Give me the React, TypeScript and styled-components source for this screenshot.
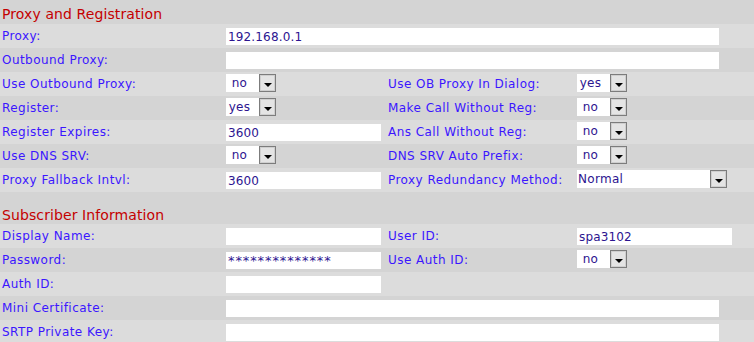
import styled, { createGlobalStyle } from 'styled-components';

const GlobalStyle = createGlobalStyle`
    html, body {
        margin: 0;
        padding: 0;
        background: #d4d4d4;
    }
    body {
        font-family: Verdana, "DejaVu Sans", sans-serif;
    }
`

const Page = styled.div`
    width: 754px;
    display: flex;
    flex-direction: column;
`
const SectionTitle = styled.div<{spaced?: boolean}>`
    height: ${(props)=>props.spaced ? '32px' : '24px'};
    display: flex;
    align-items: flex-end;
    padding: 0 0 ${(props)=>props.spaced ? '1px' : '2px'} 2px;
    box-sizing: border-box;
    background: #d4d4d4;
    color: #c40000;
    font-size: 14px;
    letter-spacing: 0.1px;
`
const Row = styled.div<{light?: boolean}>`
    display: grid;
    grid-template-columns: 226px 160px 191px 1fr;
    height: 24px;
    align-items: start;
    background: ${(props)=>props.light ? '#dcdcdc' : '#d4d4d4'};
`
const Label = styled.div`
    padding: 5px 0 0 2px;
    font-size: 12px;
    letter-spacing: 0.45px;
    color: #3b16ff;
    white-space: nowrap;
`
const TextBox = styled.input<{wide?: boolean; masked?: boolean}>`
    margin-top: 4px;
    width: ${(props)=>props.wide ? '493px' : '155px'};
    height: 17px;
    box-sizing: border-box;
    border: 0;
    outline: none;
    padding: 0 2px;
    background: #fff;
    font-family: Verdana, "DejaVu Sans", sans-serif;
    font-size: ${(props)=>props.masked ? '13px' : '12px'};
    letter-spacing: ${(props)=>props.masked ? '0.9px' : '0.15px'};
    color: #2c1490;
    grid-column: ${(props)=>props.wide ? '2 / 5' : 'auto'};
`
const Select = styled.div<{long?: boolean}>`
    margin-top: 2px;
    display: flex;
    height: 18px;
    width: ${(props)=>props.long ? '150px' : '50px'};
`
const SelectValue = styled.div<{long?: boolean}>`
    flex: 1;
    background: #fff;
    font-size: 12px;
    letter-spacing: 0.3px;
    line-height: 18px;
    color: #2c1490;
    text-align: ${(props)=>props.long ? 'left' : 'center'};
    padding: ${(props)=>props.long ? '0 0 0 1px' : '0 6px 0 0'};
`
const DropButton = styled.div`
    width: 17px;
    height: 18px;
    box-sizing: border-box;
    border: 1px solid #7c7c7c;
    box-shadow: inset 0 0 0 1px #cfcfcf;
    background: #e4e4e4;
    display: flex;
    justify-content: center;
    align-items: center;
    padding-top: 3px;
    &::after{
        content: '';
        border-left: 4px solid transparent;
        border-right: 4px solid transparent;
        border-top: 4px solid #000;
    }
`
const Empty = styled.div``

function Drop({value, long}:{value:string; long?:boolean}){
    return (
        <Select long={long}>
            <SelectValue long={long}>{value}</SelectValue>
            <DropButton/>
        </Select>
    )
}

export default function App(){
    return (
        <Page>
            <GlobalStyle/>
            <SectionTitle>Proxy and Registration</SectionTitle>
            <Row light>
                <Label>Proxy:</Label>
                <TextBox wide readOnly value="192.168.0.1"/>
            </Row>
            <Row>
                <Label>Outbound Proxy:</Label>
                <TextBox wide readOnly value=""/>
            </Row>
            <Row light>
                <Label>Use Outbound Proxy:</Label>
                <Drop value="no"/>
                <Label>Use OB Proxy In Dialog:</Label>
                <Drop value="yes"/>
            </Row>
            <Row>
                <Label>Register:</Label>
                <Drop value="yes"/>
                <Label>Make Call Without Reg:</Label>
                <Drop value="no"/>
            </Row>
            <Row light>
                <Label>Register Expires:</Label>
                <TextBox readOnly value="3600"/>
                <Label>Ans Call Without Reg:</Label>
                <Drop value="no"/>
            </Row>
            <Row>
                <Label>Use DNS SRV:</Label>
                <Drop value="no"/>
                <Label>DNS SRV Auto Prefix:</Label>
                <Drop value="no"/>
            </Row>
            <Row light>
                <Label>Proxy Fallback Intvl:</Label>
                <TextBox readOnly value="3600"/>
                <Label>Proxy Redundancy Method:</Label>
                <Drop long value="Normal"/>
            </Row>
            <SectionTitle spaced>Subscriber Information</SectionTitle>
            <Row light>
                <Label>Display Name:</Label>
                <TextBox readOnly value=""/>
                <Label>User ID:</Label>
                <TextBox readOnly value="spa3102"/>
            </Row>
            <Row>
                <Label>Password:</Label>
                <TextBox masked readOnly value="**************"/>
                <Label>Use Auth ID:</Label>
                <Drop value="no"/>
            </Row>
            <Row light>
                <Label>Auth ID:</Label>
                <TextBox readOnly value=""/>
                <Empty/>
                <Empty/>
            </Row>
            <Row>
                <Label>Mini Certificate:</Label>
                <TextBox wide readOnly value=""/>
            </Row>
            <Row light>
                <Label>SRTP Private Key:</Label>
                <TextBox wide readOnly value=""/>
            </Row>
        </Page>
    )
}
